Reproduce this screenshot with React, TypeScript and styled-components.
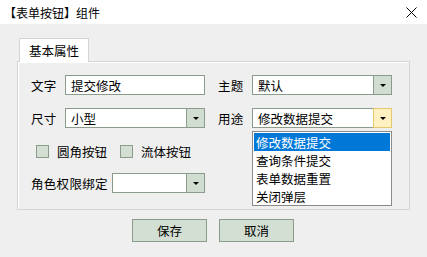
import React, { useState } from "react";
import styled, { createGlobalStyle } from "styled-components";

const GlobalStyle = createGlobalStyle`
  html, body {
    margin: 0;
    padding: 0;
    background: #efefef;
  }
  body {
    font-family: "Noto Sans CJK SC", "Noto Sans", sans-serif;
    font-size: 12px;
    color: #000;
  }
  * {
    box-sizing: border-box;
  }
`;

const Window = styled.div`
  width: 427px;
  height: 257px;
  background: #efefef;
  display: flex;
  flex-direction: column;
`;

const TitleBar = styled.div`
  height: 24px;
  background: #fff;
  display: flex;
  align-items: center;
  justify-content: space-between;
  padding: 0 10px 0 4px;
  font-size: 12px;
`;

const CloseButton = styled.div`
  width: 11px;
  height: 11px;
  display: flex;
  cursor: pointer;
  svg {
    width: 11px;
    height: 11px;
  }
`;

const Body = styled.div`
  padding: 14px 17px 0 17px;
  display: flex;
  flex-direction: column;
`;

const TabStrip = styled.div`
  display: flex;
  padding-left: 2px;
  margin-bottom: -1px;
  position: relative;
  z-index: 1;
`;

const Tab = styled.div`
  width: 70px;
  height: 24px;
  background: #fff;
  border: 1px solid #d4d4d4;
  border-bottom: none;
  display: flex;
  align-items: center;
  padding-left: 9px;
  font-size: 12.5px;
`;

const Panel = styled.div`
  width: 393px;
  height: 149px;
  border: 1px solid #d4d4d4;
  box-shadow: inset 1px 1px 0 #fff;
  padding: 13px 0 0 13px;
  display: flex;
  flex-direction: column;
`;

const Row = styled.div<{ $gap?: number }>`
  display: flex;
  align-items: center;
  height: 20px;
  margin-bottom: ${(p) => p.$gap ?? 13}px;
`;

const Label = styled.span<{ $w: number }>`
  width: ${(p) => p.$w}px;
  flex: none;
  font-size: 12.5px;
  letter-spacing: 0.3px;
`;

const Field = styled.div<{ $w: number; $last?: boolean }>`
  position: relative;
  width: ${(p) => p.$w}px;
  height: 20px;
  margin-right: ${(p) => (p.$last ? 0 : 13)}px;
`;

const TextInput = styled.input`
  width: 100%;
  height: 100%;
  border: 1px solid #8c9c8c;
  background: #fff;
  padding: 0 5px;
  font: inherit;
  font-size: 12.5px;
  outline: none;
`;

const SelectBox = styled.div`
  width: 100%;
  height: 100%;
  display: flex;
  border: 1px solid #8c9c8c;
  background: #fff;
`;

const SelectValue = styled.div`
  flex: 1;
  display: flex;
  align-items: center;
  padding-left: 5px;
  font-size: 12.5px;
`;

const ArrowButton = styled.div<{ $active?: boolean }>`
  width: 18px;
  flex: none;
  display: flex;
  align-items: center;
  justify-content: center;
  background: ${(p) => (p.$active ? "#fff1c2" : "#d0ddd0")};
  border-left: 1px solid ${(p) => (p.$active ? "#e6c96c" : "#8c9c8c")};
  ${(p) =>
    p.$active &&
    `
    margin: -1px -1px -1px 0;
    border: 1px solid #e6c96c;
    width: 19px;
  `}
  &::after {
    content: "";
    border-left: 3px solid transparent;
    border-right: 3px solid transparent;
    border-top: 3px solid #000;
  }
`;

const DropList = styled.ul`
  position: absolute;
  top: 23px;
  left: 0;
  width: 140px;
  margin: 0;
  padding: 1px 1px 0 1px;
  list-style: none;
  background: #fff;
  border: 1px solid #8a8a8a;
  z-index: 2;
`;

const DropItem = styled.li<{ $selected?: boolean }>`
  height: 18px;
  display: flex;
  align-items: center;
  padding-left: 2px;
  font-size: 12.5px;
  background: ${(p) => (p.$selected ? "#0078d7" : "transparent")};
  color: ${(p) => (p.$selected ? "#fff" : "#000")};
`;

const CheckRow = styled.div`
  display: flex;
  align-items: center;
  height: 20px;
  padding-left: 5px;
  margin-bottom: 12px;
`;

const Check = styled.label`
  display: flex;
  align-items: center;
  gap: 8px;
  margin-right: 13px;
  font-size: 12.5px;
`;

const CheckBox = styled.span`
  width: 13px;
  height: 13px;
  border: 1px solid #8c9c8c;
  background: #d3dfd3;
`;

const ButtonBar = styled.div`
  display: flex;
  justify-content: center;
  gap: 12px;
  margin-top: 9px;
  padding-right: 1px;
`;

const Button = styled.button`
  width: 75px;
  height: 23px;
  border: 1px solid #8c9c8c;
  background: #d2dfd2;
  font: inherit;
  font-size: 12.5px;
  color: #000;
  padding: 0;
  cursor: pointer;
`;

const Select: React.FC<{
  value: string;
  active?: boolean;
  children?: React.ReactNode;
}> = ({ value, active, children }) => (
  <>
    <SelectBox>
      <SelectValue>{value}</SelectValue>
      <ArrowButton $active={active} />
    </SelectBox>
    {children}
  </>
);

const purposes = ["修改数据提交", "查询条件提交", "表单数据重置", "关闭弹层"];

export default function App() {
  const [text, setText] = useState("提交修改");
  const [purpose, setPurpose] = useState(purposes[0]);

  return (
    <Window>
      <GlobalStyle />
      <TitleBar>
        <span>【表单按钮】组件</span>
        <CloseButton>
          <svg viewBox="0 0 11 11" fill="none" stroke="#000" strokeWidth="1">
            <line x1="0.5" y1="0.5" x2="10.5" y2="10.5" />
            <line x1="10.5" y1="0.5" x2="0.5" y2="10.5" />
          </svg>
        </CloseButton>
      </TitleBar>
      <Body>
        <TabStrip>
          <Tab>基本属性</Tab>
        </TabStrip>
        <Panel>
          <Row>
            <Label $w={34}>文字</Label>
            <Field $w={140}>
              <TextInput value={text} onChange={(e) => setText(e.target.value)} />
            </Field>
            <Label $w={34}>主题</Label>
            <Field $w={140} $last>
              <Select value="默认" />
            </Field>
          </Row>
          <Row>
            <Label $w={34}>尺寸</Label>
            <Field $w={140}>
              <Select value="小型" />
            </Field>
            <Label $w={34}>用途</Label>
            <Field $w={140} $last>
              <Select value={purpose} active>
                <DropList>
                  {purposes.map((p) => (
                    <DropItem
                      key={p}
                      $selected={p === purpose}
                      onClick={() => setPurpose(p)}
                    >
                      {p}
                    </DropItem>
                  ))}
                </DropList>
              </Select>
            </Field>
          </Row>
          <CheckRow>
            <Check>
              <CheckBox />
              圆角按钮
            </Check>
            <Check>
              <CheckBox />
              流体按钮
            </Check>
          </CheckRow>
          <Row $gap={0}>
            <Label $w={81}>角色权限绑定</Label>
            <Field $w={93}>
              <Select value="" />
            </Field>
          </Row>
        </Panel>
        <ButtonBar>
          <Button>保存</Button>
          <Button>取消</Button>
        </ButtonBar>
      </Body>
    </Window>
  );
}
